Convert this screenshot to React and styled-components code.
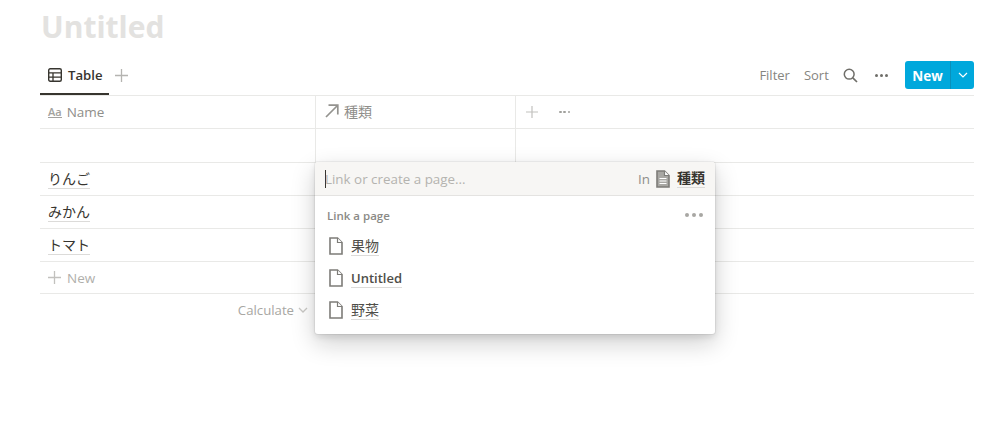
import { createGlobalStyle, styled } from 'styled-components';

const GlobalStyle = createGlobalStyle`
  html, body {
    margin: 0;
    background: #fff;
  }
  body {
    font-family: "Open Sans", "Noto Sans CJK JP", sans-serif;
    color: rgb(55, 53, 47);
    overflow: hidden;
  }
`;

const PageIcon = ({ filled }) => (
  <svg width="16" height="18" viewBox="0 0 16 18" fill="none">
    <path
      d="M2 1h7.5L14 5.5V17H2z"
      fill={filled ? '#a8a7a3' : '#fff'}
      stroke="#7d7c78"
      strokeWidth="1.6"
    />
    <path d="M9.5 1v4.5H14" fill="#fff" stroke="#7d7c78" strokeWidth="1.2" />
    {filled && <path d="M4.5 8.5h7M4.5 11h7M4.5 13.5h7" stroke="#fff" strokeWidth="1" />}
  </svg>
);

const PlusIcon = ({ size = 13, color = '#b5b4b1' }) => (
  <svg width={size} height={size} viewBox="0 0 13 13">
    <path d="M6.5 0v13M0 6.5h13" stroke={color} strokeWidth="1.3" />
  </svg>
);

const Dots = ({ color = '#8b8a86', size = 3 }) => (
  <DotRow $color={color} $size={size}>
    <i />
    <i />
    <i />
  </DotRow>
);

const App = () => {
  return (
    <Page>
      <GlobalStyle />
      <Title>Untitled</Title>
      <Toolbar>
        <Tabs>
          <ActiveTab>
            <svg width="14" height="14" viewBox="0 0 14 14" fill="none">
              <rect x="0.7" y="0.7" width="12.6" height="12.6" rx="1.5" stroke="#37352f" strokeWidth="1.4" />
              <path d="M1 4.8h12M1 9.2h12M5 4.8V13" stroke="#37352f" strokeWidth="1.3" />
            </svg>
            Table
          </ActiveTab>
          <AddTab>
            <PlusIcon />
          </AddTab>
        </Tabs>
        <Actions>
          <ActionText>Filter</ActionText>
          <ActionText>Sort</ActionText>
          <svg width="15" height="15" viewBox="0 0 15 15" fill="none">
            <circle cx="6.2" cy="6.2" r="4.9" stroke="#6f6e69" strokeWidth="1.5" />
            <path d="M9.8 9.8 14 14" stroke="#6f6e69" strokeWidth="1.7" />
          </svg>
          <ToolDots>
            <Dots color="#6f6e69" />
          </ToolDots>
          <NewButton>
            <NewLabel>New</NewLabel>
            <NewCaret>
              <svg width="10" height="6" viewBox="0 0 10 6" fill="none">
                <path d="M1 1l4 4 4-4" stroke="#fff" strokeWidth="1.2" />
              </svg>
            </NewCaret>
          </NewButton>
        </Actions>
      </Toolbar>
      <Table>
        <HeaderRow>
          <NameCell $head>
            <AaIcon>Aa</AaIcon>
            Name
          </NameCell>
          <KindCell $head>
            <svg width="14" height="14" viewBox="0 0 14 14" fill="none">
              <path d="M1 13 12.5 1.5M3.5 1.2h9.3v9.3" stroke="#94938f" strokeWidth="1.7" />
            </svg>
            種類
          </KindCell>
          <ExtraCell>
            <PlusIcon size={12} color="#c2c1be" />
            <Dots color="#a0a09c" size={2.5} />
          </ExtraCell>
        </HeaderRow>
        <Row $height={34}>
          <NameCell />
          <KindCell />
          <ExtraCell />
        </Row>
        {['りんご', 'みかん', 'トマト'].map((name) => (
          <Row key={name} $height={33}>
            <NameCell>
              <Underlined>{name}</Underlined>
            </NameCell>
            <KindCell />
            <ExtraCell />
          </Row>
        ))}
        <Row $height={32}>
          <NewRow>
            <PlusIcon color="#c2c1be" />
            New
          </NewRow>
        </Row>
      </Table>
      <Footer>
        <Calculate>
          Calculate
          <svg width="10" height="6" viewBox="0 0 10 6" fill="none">
            <path d="M1 1l4 4 4-4" stroke="#c9c8c5" strokeWidth="1.3" />
          </svg>
        </Calculate>
      </Footer>
      <Popover>
        <SearchBar>
          <Caret />
          <Placeholder>Link or create a page...</Placeholder>
          <InLabel>In</InLabel>
          <PageIcon filled />
          <Target>種類</Target>
        </SearchBar>
        <SectionHead>
          Link a page
          <Dots color="#a8a7a3" size={4} />
        </SectionHead>
        {['果物', 'Untitled', '野菜'].map((label) => (
          <Option key={label}>
            <PageIcon />
            <OptionLabel $bold={label === 'Untitled'}>{label}</OptionLabel>
          </Option>
        ))}
      </Popover>
    </Page>
  );
};
export default App;

const Page = styled.div`
  position: relative;
  width: 996px;
  height: 425px;
  box-sizing: border-box;
  padding: 0 22px 0 40px;
`;

const Title = styled.h1`
  margin: 0;
  height: 60px;
  padding: 7px 0 0 1px;
  box-sizing: border-box;
  font-size: 30px;
  line-height: 40px;
  font-weight: 700;
  color: #e3e2e0;
`;

const Toolbar = styled.div`
  display: flex;
  justify-content: space-between;
  height: 36px;
  box-sizing: border-box;
  border-bottom: 1px solid #e9e9e7;
`;

const Tabs = styled.div`
  display: flex;
`;

const ActiveTab = styled.div`
  display: flex;
  align-items: center;
  gap: 6px;
  width: 69px;
  height: 35px;
  padding-left: 8px;
  padding-bottom: 3px;
  box-sizing: border-box;
  border-bottom: 2px solid #37352f;
  font-size: 13.2px;
  font-weight: 600;
`;

const AddTab = styled.div`
  display: flex;
  align-items: center;
  padding: 0 0 5px 6px;
`;

const Actions = styled.div`
  display: flex;
  align-items: center;
  gap: 14px;
  padding-bottom: 5px;
`;

const ActionText = styled.span`
  font-size: 13px;
  color: #86857f;
`;

const ToolDots = styled.span`
  display: inline-flex;
  margin-left: 3px;
`;

const NewButton = styled.div`
  display: flex;
  height: 28px;
  margin-left: 3px;
  border-radius: 3px;
  overflow: hidden;
  background: #00a8dc;
  color: #fff;
  font-size: 13.5px;
  font-weight: 700;
`;

const NewLabel = styled.div`
  display: flex;
  align-items: center;
  justify-content: center;
  width: 46px;
  padding-top: 1px;
  box-sizing: border-box;
  border-right: 1px solid #0a90bb;
`;

const NewCaret = styled.div`
  display: flex;
  align-items: center;
  justify-content: center;
  width: 23px;
`;

const DotRow = styled.span`
  display: inline-flex;
  gap: ${(p) => p.$size * 0.7}px;
  i {
    display: block;
    width: ${(p) => p.$size}px;
    height: ${(p) => p.$size}px;
    border-radius: 50%;
    background: ${(p) => p.$color};
  }
`;

const Table = styled.div`
  display: flex;
  flex-direction: column;
`;

const Row = styled.div`
  display: flex;
  height: ${(p) => p.$height}px;
  box-sizing: border-box;
  border-bottom: 1px solid #e9e9e7;
`;

const HeaderRow = styled(Row)`
  height: 33px;
`;

const NameCell = styled.div`
  display: flex;
  align-items: center;
  gap: 5px;
  width: 276px;
  flex: none;
  box-sizing: border-box;
  padding-left: 8px;
  padding-bottom: ${(p) => (p.$head ? 1 : 0)}px;
  border-right: 1px solid #e9e9e7;
  font-size: ${(p) => (p.$head ? 13.5 : 14)}px;
  color: ${(p) => (p.$head ? '#8f8e8a' : '#37352f')};
`;

const KindCell = styled.div`
  display: flex;
  align-items: center;
  gap: 5px;
  width: 200px;
  flex: none;
  box-sizing: border-box;
  padding-left: 9px;
  padding-bottom: ${(p) => (p.$head ? 3 : 0)}px;
  border-right: 1px solid #e9e9e7;
  font-size: 14px;
  color: ${(p) => (p.$head ? '#8f8e8a' : '#37352f')};
`;

const ExtraCell = styled.div`
  display: flex;
  align-items: center;
  gap: 21px;
  padding-left: 10px;
`;

const AaIcon = styled.span`
  font-size: 11px;
  font-weight: 600;
  line-height: 11px;
  color: #a3a29e;
  border-bottom: 1.5px solid #a3a29e;
`;

const Underlined = styled.span`
  line-height: 19px;
  border-bottom: 1px solid #dcdbd9;
`;

const NewRow = styled.div`
  display: flex;
  align-items: center;
  gap: 6px;
  padding-left: 8px;
  font-size: 13.5px;
  color: #b0afab;
`;

const Footer = styled.div`
  display: flex;
  width: 276px;
  box-sizing: border-box;
  justify-content: flex-end;
  padding: 7px 8px 0 0;
`;

const Calculate = styled.div`
  display: flex;
  align-items: center;
  gap: 4px;
  font-size: 13.2px;
  color: #a8a7a3;
`;

const Popover = styled.div`
  position: absolute;
  left: 315px;
  top: 162px;
  width: 400px;
  height: 172px;
  background: #fff;
  border-radius: 3px;
  box-shadow:
    rgba(15, 15, 15, 0.05) 0 0 0 1px,
    rgba(15, 15, 15, 0.1) 0 3px 6px,
    rgba(15, 15, 15, 0.2) 0 9px 24px;
`;

const SearchBar = styled.div`
  display: flex;
  align-items: center;
  height: 34px;
  box-sizing: border-box;
  padding: 0 10px 0 10px;
  background: #f7f6f4;
  border-bottom: 1px solid #e4e3e1;
  border-radius: 3px 3px 0 0;
  font-size: 13.4px;
`;

const Caret = styled.span`
  width: 1px;
  height: 18px;
  background: #37352f;
`;

const Placeholder = styled.span`
  flex: 1;
  margin-left: -1px;
  color: #b4b3af;
`;

const InLabel = styled.span`
  margin-right: 5px;
  color: #8f8e8a;
`;

const Target = styled.span`
  margin-left: 6px;
  font-weight: 600;
  font-size: 14px;
  line-height: 18px;
  border-bottom: 1px solid #dcdbd9;
`;

const SectionHead = styled.div`
  display: flex;
  align-items: center;
  justify-content: space-between;
  height: 34px;
  padding: 4px 12px 0 12px;
  box-sizing: border-box;
  font-size: 11.5px;
  font-weight: 600;
  color: #8b8a86;
`;

const Option = styled.div`
  display: flex;
  align-items: center;
  gap: 7px;
  height: 32px;
  padding-left: 13px;
`;

const OptionLabel = styled.span`
  font-size: ${(p) => (p.$bold ? 13 : 14)}px;
  line-height: 18px;
  font-weight: ${(p) => (p.$bold ? 600 : 400)};
  color: #4f4e49;
  border-bottom: 1px solid #dcdbd9;
`;
